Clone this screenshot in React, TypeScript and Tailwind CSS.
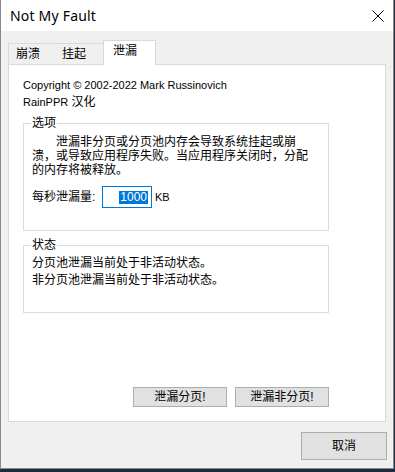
import React from "react";

const font = "font-['Liberation_Sans','Noto_Sans_CJK_SC',sans-serif]";

function GroupBox({ label, className, children }: { label: string; className?: string; children: React.ReactNode }) {
  return (
    <div className={`border border-[#dcdcdc] ${className ?? ""}`}>
      <div className="-mt-[8px] ml-[7px] w-fit bg-white px-px leading-[14px]">{label}</div>
      {children}
    </div>
  );
}

export default function App() {
  return (
    <div className={`w-[395px] h-[472px] bg-[#1c2d3f] ${font} text-[12px] text-black`}>
      <div className="w-[394px] h-[469px] border-x border-b border-[#8a8a8a] bg-[#f0f0f0] flex flex-col">
        {/* title bar */}
        <div className="h-[31px] bg-white flex items-center justify-between pl-[9px] pr-[8px]">
          <span className="font-['Noto_Sans',sans-serif] text-[14px] tracking-[0.2px]">Not My Fault</span>
          <svg width="12" height="12" viewBox="0 0 12 12" className="mr-[1px]">
            <path d="M0.5 0.5 L11.5 11.5 M11.5 0.5 L0.5 11.5" stroke="#000" strokeWidth="1" />
          </svg>
        </div>

        {/* tabs */}
        <div className="flex items-end pl-[7px] pt-[9px] h-[33px]">
          <div className="w-[49px] h-[21px] border-t border-x border-[#d9d9d9] bg-[#f0f0f0] pl-[7px] pt-[2px] leading-[16px]">崩溃</div>
          <div className="w-[48px] h-[21px] -ml-px border-t border-r border-[#d9d9d9] bg-[#f0f0f0] pl-[6px] pt-[2px] leading-[16px]">挂起</div>
          <div className="relative z-10 w-[53px] h-[25px] -ml-px -mb-px border-t border-x border-[#d9d9d9] bg-white pl-[9px] pt-[2px] leading-[16px]">泄漏</div>
        </div>

        {/* panel */}
        <div className="ml-[7px] w-[378px] h-[358px] border border-[#d9d9d9] bg-white flex flex-col pl-[14px] pt-[12px]">
          <div className="leading-[17px] text-[11px]">Copyright © 2002-2022 Mark Russinovich</div>
          <div className="leading-[17px]">
            <span className="text-[11px]">RainPPR</span> 汉化
          </div>

          <GroupBox label="选项" className="mt-[12px] w-[306px] h-[108px]">
            <div className="mt-[5px] pl-[8px] leading-[14px]">
              <div className="pl-[24px]">泄漏非分页或分页池内存会导致系统挂起或崩</div>
              <div>溃，或导致应用程序失败。当应用程序关闭时，分配</div>
              <div>的内存将被释放。</div>
            </div>
            <div className="mt-[9px] pl-[8px] flex items-center">
              <span className="w-[70px]">每秒泄漏量:</span>
              <div className="w-[50px] h-[22px] border border-[#0078d7] bg-white flex items-center justify-end pr-[3px]">
                <span className="bg-[#0078d7] text-white leading-[13px] px-px">1000</span>
              </div>
              <span className="ml-[3px] text-[11px]">KB</span>
            </div>
          </GroupBox>

          <GroupBox label="状态" className="mt-[14px] w-[306px] h-[68px]">
            <div className="mt-[3px] pl-[8px] leading-[17px]">
              <div>分页池泄漏当前处于非活动状态。</div>
              <div>非分页池泄漏当前处于非活动状态。</div>
            </div>
          </GroupBox>

          <div className="mt-auto mb-[14px] w-[306px] flex justify-end gap-[8px]">
            <button className="w-[94px] h-[20px] border border-[#adadad] bg-[#e1e1e1] leading-[18px]">泄漏分页!</button>
            <button className="w-[94px] h-[20px] border border-[#adadad] bg-[#e1e1e1] leading-[18px]">泄漏非分页!</button>
          </div>
        </div>

        <div className="flex justify-end pr-[6px] mt-[10px]">
          <button className="w-[86px] h-[28px] border border-[#adadad] bg-[#e1e1e1]">取消</button>
        </div>
      </div>
    </div>
  );
}
